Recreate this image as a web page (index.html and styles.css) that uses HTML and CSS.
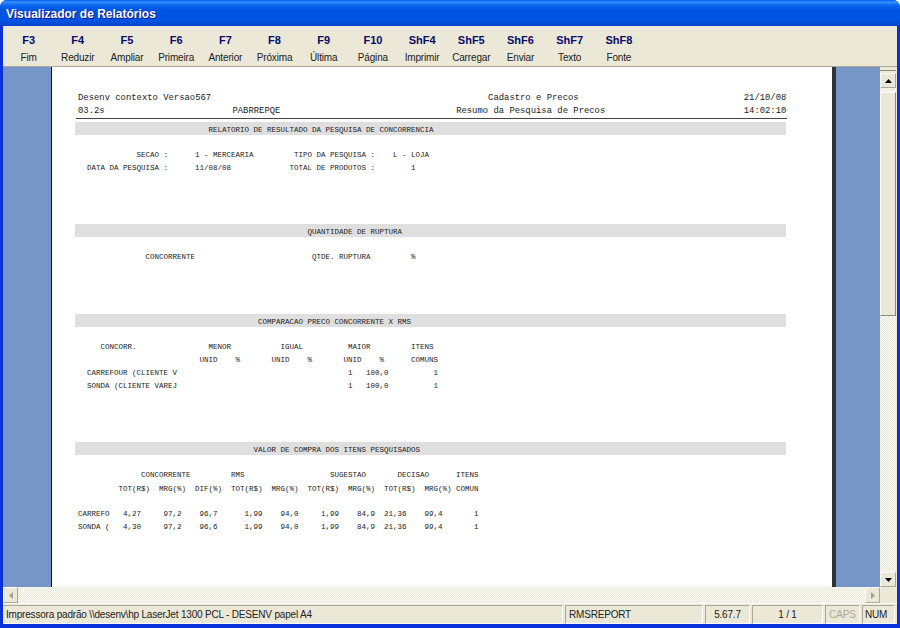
FILE: index.html
```html
<!DOCTYPE html>
<html lang="pt">
<head>
<meta charset="utf-8">
<title>Visualizador de Relatórios</title>
<link rel="stylesheet" href="styles.css">
</head>
<body>
<div class="window">
  <div class="titlebar">Visualizador de Relatórios</div>
  <div class="inner">
    <div class="toolbar">
      <div class="tool"><b>F3</b><span>Fim</span></div>
      <div class="tool"><b>F4</b><span>Reduzir</span></div>
      <div class="tool"><b>F5</b><span>Ampliar</span></div>
      <div class="tool"><b>F6</b><span>Primeira</span></div>
      <div class="tool"><b>F7</b><span>Anterior</span></div>
      <div class="tool"><b>F8</b><span>Próxima</span></div>
      <div class="tool"><b>F9</b><span>Última</span></div>
      <div class="tool"><b>F10</b><span>Página</span></div>
      <div class="tool"><b>ShF4</b><span>Imprimir</span></div>
      <div class="tool"><b>ShF5</b><span>Carregar</span></div>
      <div class="tool"><b>ShF6</b><span>Enviar</span></div>
      <div class="tool"><b>ShF7</b><span>Texto</span></div>
      <div class="tool"><b>ShF8</b><span>Fonte</span></div>
    </div>
    <div class="viewer">
      <div class="canvas">
        <div class="paper">
<pre class="head first">Desenv contexto Versao567                                                    Cadastro e Precos                               21/10/08</pre>
<pre class="head">03.2s                        PABRREPQE                                 Resumo da Pesquisa de Precos                          14:02:10</pre>
<div class="rule"></div>
<pre class="band">                             RELATORIO DE RESULTADO DA PESQUISA DE CONCORRENCIA</pre>
<pre class="body gap-a">             SECAO :      1 - MERCEARIA         TIPO DA PESQUISA :    L - LOJA</pre>
<pre class="body">  DATA DA PESQUISA :      11/08/08             TOTAL DE PRODUTOS :        1</pre>
<pre class="band gap-b">                                                   QUANTIDADE DE RUPTURA</pre>
<pre class="body gap-a">               CONCORRENTE                          QTDE. RUPTURA         %</pre>
<pre class="band gap-c">                                        COMPARACAO PRECO CONCORRENTE X RMS</pre>
<pre class="body gap-a">     CONCORR.                MENOR           IGUAL          MAIOR         ITENS</pre>
<pre class="body">                           UNID    %       UNID    %       UNID    %      COMUNS</pre>
<pre class="body">  CARREFOUR (CLIENTE V                                      1   100,0          1</pre>
<pre class="body">  SONDA (CLIENTE VAREJ                                      1   100,0          1</pre>
<pre class="band gap-b">                                       VALOR DE COMPRA DOS ITENS PESQUISADOS</pre>
<pre class="body gap-a">              CONCORRENTE         RMS                   SUGESTAO       DECISAO      ITENS</pre>
<pre class="body row-tall">         TOT(R$)  MRG(%)  DIF(%)  TOT(R$)  MRG(%)  TOT(R$)  MRG(%)  TOT(R$)  MRG(%) COMUN</pre>
<pre class="body gap-e">CARREFO   4,27     97,2    96,7      1,99    94,0     1,99    84,9  21,36    99,4       1</pre>
<pre class="body">SONDA (   4,30     97,2    96,6      1,99    94,0     1,99    84,9  21,36    99,4       1</pre>
        </div>
      </div>
      <div class="vscroll">
        <div class="vtop"></div>
        <div class="sbtn"><svg width="7" height="4" viewBox="0 0 7 4"><path d="M3.500 0L7 4H0z"/></svg></div>
        <div class="vtrack"><div class="vthumb"></div></div>
        <div class="sbtn"><svg width="7" height="4" viewBox="0 0 7 4"><path d="M0 0h7L3.500 4z"/></svg></div>
      </div>
      <div class="vedge"></div>
    </div>
    <div class="hscroll">
      <div class="hbtn"><svg width="4" height="7" viewBox="0 0 4 7"><path d="M4 0v7L0 3.500z"/></svg></div>
      <div class="htrack"></div>
      <div class="hbtn"><svg width="4" height="7" viewBox="0 0 4 7"><path d="M0 0l4 3.500L0 7z"/></svg></div>
      <div class="corner"></div>
    </div>
    <div class="status">
      <div class="cell c-main">Impressora padrão \\desenv\hp LaserJet 1300 PCL - DESENV papel A4</div>
      <div class="cell c-name">RMSREPORT</div>
      <div class="cell c-ver">5.67.7</div>
      <div class="cell c-page">1 / 1</div>
      <div class="cell c-caps">CAPS</div>
      <div class="cell c-num">NUM</div>
    </div>
  </div>
</div>
</body>
</html>
```
FILE: styles.css
```css
* { box-sizing: border-box; }
html, body { margin: 0; height: 100%; overflow: hidden; }
body { font-family: "Liberation Sans", Arial, sans-serif; font-size: 10px; color: #000; }
.window {
  width: 900px; height: 628px; display: flex; flex-direction: column;
  background: #0831d9; border-radius: 7px 7px 0 0; overflow: hidden;
}
.titlebar {
  height: 26px; flex: none; padding: 7px 0 0 6px;
  font-size: 12px; line-height: 14px; font-weight: bold; color: #fff;
  text-shadow: 1px 1px 0 #0f1089;
  background: linear-gradient(#0058ee 0, #3a93ff 2px, #0a6af0 5px, #0054e3 10px, #0055e5 20px, #0249d0 25px, #003dc0 26px);
}
.inner {
  flex: 1; min-height: 0; display: flex; flex-direction: column;
  margin: 0 3px 4px 3px; background: #ece9d8;
}
.toolbar {
  height: 41px; flex: none; display: flex; padding-left: 1px;
  background: #ebe8d8; border-bottom: 1px solid #aca899;
}
.tool { width: 49.200px; display: flex; flex-direction: column; align-items: center; }
.tool b { font-size: 11px; line-height: 13px; margin-top: 8px; color: #0a0a6e; }
.tool span { font-size: 10px; line-height: 13px; margin-top: 4px; color: #222; letter-spacing: -.15px; }
.viewer { flex: 1; min-height: 0; display: flex; }
.canvas { flex: 1; min-width: 0; display: flex; padding-left: 48px; background: #7596c6; }
.paper {
  width: 785px; height: 100%; padding: 25px 0 0 26px; background: #fff;
  border-left: 1px solid #0a0a2a; border-right: 4px solid #333;
}
pre { margin: 0; font-family: "Liberation Mono", "Courier New", monospace; white-space: pre; color: #222; }
.head { font-size: 8.900px; line-height: 13px; height: 13px; }
.rule { width: 711px; height: 1px; margin: 0 0 3px -2px; background: #444; }
.band {
  width: 711px; height: 13px; margin-left: -3px; padding-left: 3px;
  background: #dfdfdf; font-size: 7.500px; line-height: 17px;
}
.body { font-size: 7.500px; line-height: 13px; height: 13px; }
.row-tall { margin-top: 1px; }
.gap-a { margin-top: 14px; }
.gap-b { margin-top: 49px; }
.gap-c { margin-top: 50px; }
.gap-e { margin-top: 12px; }
.vscroll { width: 16px; flex: none; display: flex; flex-direction: column; background: #ece9d8; }
.vtop { height: 4px; flex: none; margin-bottom: 2px; background: #ebe8d8; border-bottom: 1px solid #8f8c7d; }
.sbtn {
  height: 15px; flex: none; display: flex; align-items: center; justify-content: center;
  background: #ebe8d8; border: 1px solid #fff; border-right-color: #aca899; border-bottom-color: #aca899;
}
.sbtn svg { fill: #000; }
.vtrack { flex: 1; background: repeating-conic-gradient(#fff 0 25%, #ebe8d8 0 50%) 0 0 / 2px 2px; }
.vthumb { height: 224px; margin-top: 4px; background: #ebe8d8; border: 1px solid #fff; border-right-color: #8f8c7d; border-bottom-color: #8f8c7d; }
.vedge { width: 1px; flex: none; background: #ece9d8; }
.hscroll { height: 16px; flex: none; display: flex; }
.hbtn {
  width: 15px; flex: none; display: flex; align-items: center; justify-content: center;
  background: #ebe8d8; border: 1px solid #fff; border-right-color: #aca899; border-bottom-color: #aca899;
}
.hbtn svg { fill: #a5a294; }
.htrack { flex: 1; background: repeating-conic-gradient(#fff 0 25%, #ebe8d8 0 50%) 0 0 / 2px 2px; }
.corner { width: 17px; flex: none; background: #ece9d8; }
.status {
  height: 21px; flex: none; display: flex; gap: 2px; padding: 1px 2px 0 0;
  background: #ebe8d8; border-top: 1px solid #fff; color: #222;
  font-size: 10px; letter-spacing: -.19px;
}
.cell { height: 19px; line-height: 17px; padding-left: 3px; border: 1px solid #fff; border-top-color: #aca899; border-left-color: #aca899; white-space: nowrap; }
.c-main { flex: 1; padding-left: 2px; border-left-color: transparent; }
.c-name { width: 138px; }
.c-ver { width: 45px; text-align: center; padding: 0; }
.c-page { width: 71px; text-align: center; padding: 0; }
.c-caps { width: 35px; color: #aca899; text-align: center; padding: 0; }
.c-num { width: 33px; padding-left: 2px; }
```
